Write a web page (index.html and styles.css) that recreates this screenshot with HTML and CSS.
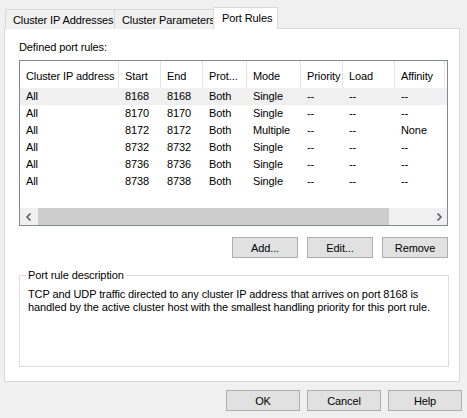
FILE: index.html
```html
<!DOCTYPE html>
<html>
<head>
<meta charset="utf-8">
<link rel="stylesheet" href="styles.css">
</head>
<body>
<div class="dialog">
  <div class="tabs">
    <div class="tab tab-first">Cluster IP Addresses</div>
    <div class="tab tab-second">Cluster Parameters</div>
    <div class="tab tab-active">Port Rules</div>
  </div>
  <div class="panel">
    <div class="label">Defined port rules:</div>
    <div class="listbox">
      <div class="row header">
        <div class="c c1">Cluster IP address</div>
        <div class="c c2">Start</div>
        <div class="c c3">End</div>
        <div class="c c4">Prot...</div>
        <div class="c c5">Mode</div>
        <div class="c c6">Priority</div>
        <div class="c c7">Load</div>
        <div class="c c8">Affinity</div>
      </div>
      <div class="row item selected">
        <div class="c c1">All</div><div class="c c2">8168</div><div class="c c3">8168</div><div class="c c4">Both</div><div class="c c5">Single</div><div class="c c6">--</div><div class="c c7">--</div><div class="c c8">--</div>
      </div>
      <div class="row item">
        <div class="c c1">All</div><div class="c c2">8170</div><div class="c c3">8170</div><div class="c c4">Both</div><div class="c c5">Single</div><div class="c c6">--</div><div class="c c7">--</div><div class="c c8">--</div>
      </div>
      <div class="row item">
        <div class="c c1">All</div><div class="c c2">8172</div><div class="c c3">8172</div><div class="c c4">Both</div><div class="c c5">Multiple</div><div class="c c6">--</div><div class="c c7">--</div><div class="c c8">None</div>
      </div>
      <div class="row item">
        <div class="c c1">All</div><div class="c c2">8732</div><div class="c c3">8732</div><div class="c c4">Both</div><div class="c c5">Single</div><div class="c c6">--</div><div class="c c7">--</div><div class="c c8">--</div>
      </div>
      <div class="row item">
        <div class="c c1">All</div><div class="c c2">8736</div><div class="c c3">8736</div><div class="c c4">Both</div><div class="c c5">Single</div><div class="c c6">--</div><div class="c c7">--</div><div class="c c8">--</div>
      </div>
      <div class="row item">
        <div class="c c1">All</div><div class="c c2">8738</div><div class="c c3">8738</div><div class="c c4">Both</div><div class="c c5">Single</div><div class="c c6">--</div><div class="c c7">--</div><div class="c c8">--</div>
      </div>
      <div class="spacer"></div>
      <div class="hscroll">
        <div class="arrow"><svg width="8" height="8" viewBox="0 0 8 8"><path d="M5.5 0.5 L2 4 L5.5 7.5" fill="none" stroke="#606060" stroke-width="1.6"/></svg></div>
        <div class="thumb"></div>
        <div class="track"></div>
        <div class="arrow"><svg width="8" height="8" viewBox="0 0 8 8"><path d="M2.5 0.5 L6 4 L2.5 7.5" fill="none" stroke="#606060" stroke-width="1.6"/></svg></div>
      </div>
    </div>
    <div class="actions">
      <button class="btn">Add...</button>
      <button class="btn">Edit...</button>
      <button class="btn">Remove</button>
    </div>
    <fieldset class="group">
      <legend>Port rule description</legend>
      <p class="desc">TCP and UDP traffic directed to any cluster IP address that arrives on port 8168 is handled by the active cluster host with the smallest handling priority for this port rule.</p>
    </fieldset>
  </div>
  <div class="footer">
    <button class="btn btn-wide">OK</button>
    <button class="btn btn-wide">Cancel</button>
    <button class="btn btn-wide">Help</button>
  </div>
</div>
</body>
</html>
```
FILE: styles.css
```css
html, body {
  margin: 0;
  padding: 0;
  background: #f0f0f0;
  font-family: "Liberation Sans", Arial, sans-serif;
  font-size: 11px;
  letter-spacing: -0.1px;
  color: #000;
}
.dialog {
  width: 467px;
  height: 418px;
  overflow: hidden;
}
.tabs {
  display: flex;
  align-items: flex-end;
  height: 22px;
  padding: 7px 0 0 5px;
  margin-bottom: -1px;
}
.tab {
  box-sizing: border-box;
  height: 20px;
  border: 1px solid #d9d9d9;
  border-bottom: none;
  background: #f0f0f0;
  padding: 3px 0 0 7px;
  line-height: 15px;
  white-space: nowrap;
}
.tab-first { width: 110px; }
.tab-second { width: 99px; border-left: none; padding-left: 7px; }
.tab-active {
  position: relative;
  z-index: 1;
  width: 65px;
  height: 22px;
  margin-left: -1px;
  background: #fff;
  padding: 3px 0 0 8px;
}
.panel {
  box-sizing: border-box;
  width: 456px;
  height: 354px;
  margin-left: 4px;
  border: 1px solid #d9d9d9;
  background: #fff;
  padding: 11px 11px 0 14px;
  display: flex;
  flex-direction: column;
}
.label {
  line-height: 15px;
  height: 15px;
  margin-bottom: 5px;
}
.listbox {
  box-sizing: border-box;
  width: 429px;
  height: 166px;
  border: 1px solid #828790;
  display: flex;
  flex-direction: column;
}
.row {
  display: flex;
  white-space: nowrap;
}
.header {
  height: 27px;
  line-height: 30px;
}
.header .c {
  border-right: 1px solid #e5e5e5;
}
.item {
  height: 17px;
  line-height: 17px;
}
.selected { background: #f0f0f0; }
.c {
  box-sizing: border-box;
  padding-left: 6px;
  overflow: hidden;
}
.c1 { width: 99px; }
.c2 { width: 42px; }
.c3 { width: 42px; }
.c4 { width: 44px; }
.c5 { width: 54px; }
.c6 { width: 42px; }
.c7 { width: 52px; }
.c8 { width: 50px; }
.spacer { flex: 1; }
.hscroll {
  height: 17px;
  display: flex;
  background: #f0f0f0;
}
.arrow {
  width: 17px;
  display: flex;
  align-items: center;
  justify-content: center;
}
.thumb {
  width: 351px;
  margin: 0 1px;
  background: #cdcdcd;
}
.track { flex: 1; }
.actions {
  display: flex;
  justify-content: flex-end;
  gap: 9px;
  margin-top: 11px;
  width: 429px;
}
.btn {
  box-sizing: border-box;
  width: 66px;
  height: 21px;
  margin: 0;
  padding: 0;
  border: 1px solid #adadad;
  background: #e1e1e1;
  font-family: "Liberation Sans", Arial, sans-serif;
  font-size: 11px;
  letter-spacing: -0.1px;
  color: #000;
}
.group {
  box-sizing: border-box;
  width: 430px;
  height: 99px;
  margin: 10px 0 0 0;
  padding: 6px 8px 0 8px;
  border: 1px solid #dcdcdc;
}
.group legend {
  padding: 0 2px;
  margin-left: -2px;
  line-height: 14px;
}
.desc {
  margin: 0;
  line-height: 13px;
}
.footer {
  display: flex;
  justify-content: flex-end;
  gap: 7px;
  padding: 8px 5px 0 0;
}
.btn-wide { width: 74px; }
```
